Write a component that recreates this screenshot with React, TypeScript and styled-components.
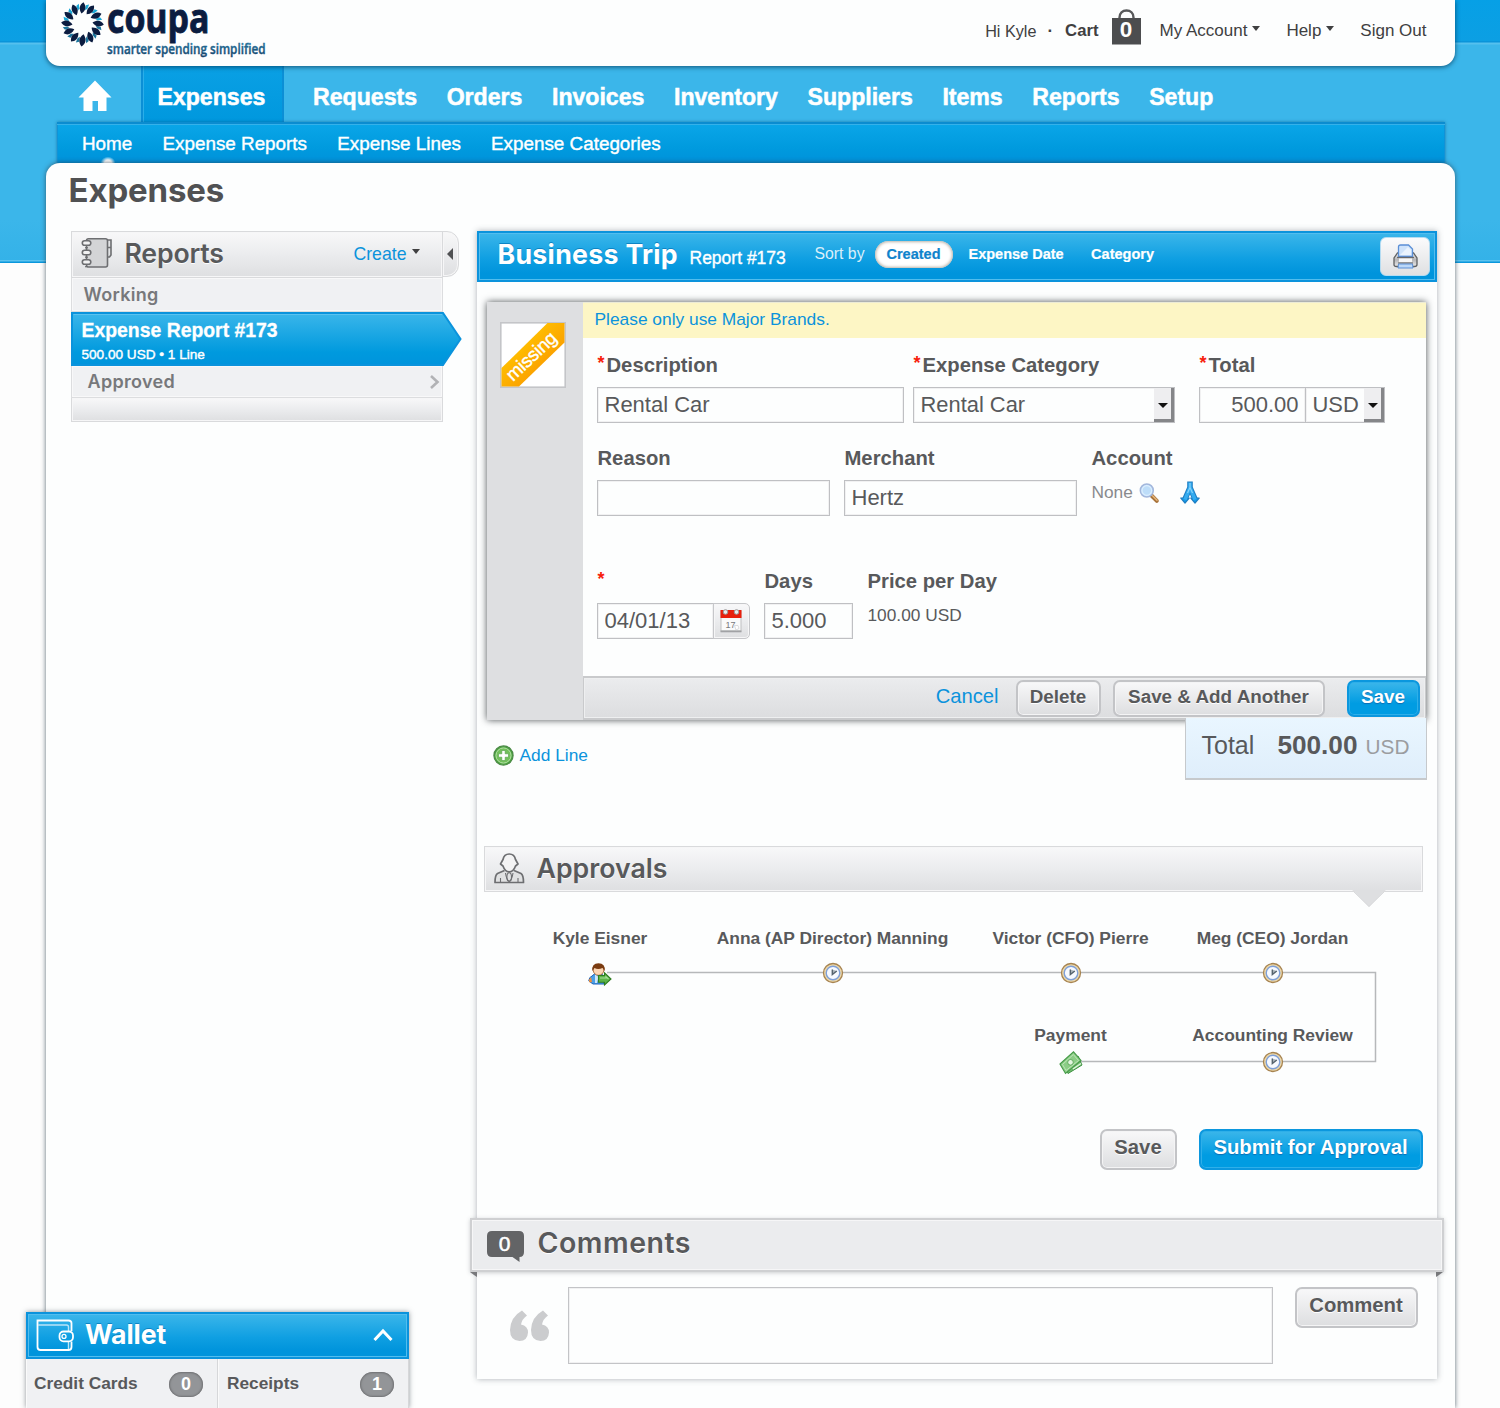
import React from 'react';
import styled, { createGlobalStyle, css } from 'styled-components';

const sans = '"Liberation Sans", Arial, Helvetica, sans-serif';
const display = 'Inter, "Liberation Sans", sans-serif';

const blueBar = css`
  background: linear-gradient(#3bb6ea, #0f9fe2 55%, #0094dc 85%);
  border: 2px solid #0b93dc;
  box-shadow: inset 0 0 0 1px #52bdee;
`;

const greyBar = css`
  background: linear-gradient(#f8f8f9, #ebecee 50%, #dedfe1);
  border: 1px solid #d9dadc;
  box-shadow: inset 0 0 0 1px #f6f6f7;
`;

const GlobalStyle = createGlobalStyle`
  *, *::before, *::after { box-sizing: border-box; }
  body {
    margin: 0;
    background: #fdfdfd;
    font-family: ${sans};
    color: #58595b;
  }
  button, input, textarea { font-family: inherit; color: inherit; margin: 0; outline: none; }
  h1, h2, h3, p { margin: 0; }
  svg { display: block; flex: none; overflow: visible; }
`;

const Page = styled.div`
  position: relative;
  width: 1500px;
  height: 1408px;
  overflow: hidden;
  display: flex;
  flex-direction: column;
  align-items: center;
  background: linear-gradient(
    #06a0e6 0, #0c9fe3 41px, #0a94da 41px, #0a94da 42px, #55c0ee 43px, #55c0ee 44px,
    #3bb6ea 45px, #3bb6ea 220px, #34b2e8 260px, #5cc3ef 260px, #5cc3ef 261px,
    #0b97dc 262px, #0b97dc 263px, #fdfdfd 263px);
`;

/* ---------- header ---------- */

const TopBar = styled.header`
  position: relative;
  z-index: 1;
  width: 1409px;
  height: 66px;
  display: flex;
  justify-content: space-between;
  background: #fdfefe;
  border-radius: 0 0 14px 14px;
  box-shadow: 0 1px 5px rgba(0, 50, 80, 0.75);
  padding: 0 28px 0 12px;
`;

const UserLinks = styled.nav`
  display: flex;
  align-items: center;
  height: 62px;
  font-size: 17px;
  color: #404041;
  white-space: nowrap;
`;

const UserLink = styled.a<{ $gap?: number; $size?: number; $bold?: boolean }>`
  display: flex;
  align-items: center;
  margin-left: ${(p) => p.$gap ?? 26}px;
  font-size: ${(p) => p.$size ?? 17}px;
  font-weight: ${(p) => (p.$bold ? 700 : 400)};
`;

const CartLink = styled(UserLink)`
  padding-bottom: 9px;
`;

const Caret = styled.i<{ $gap?: number }>`
  margin: -5px 0 0 ${(p) => p.$gap ?? 5}px;
  border: 4px solid transparent;
  border-top: 5px solid #404041;
  border-bottom: 0;
`;

const MainNav = styled.nav`
  width: 1387px;
  height: 56px;
  display: flex;
  margin-left: 2px;
  padding-left: 20px;
`;

const HomeLink = styled.a`
  width: 63.5px;
  padding-top: 14px;
`;

const NavLink = styled.a<{ $active?: boolean }>`
  height: 56px;
  padding-left: 29.6px;
  font-size: 23.1px;
  font-weight: 700;
  line-height: 62px;
  color: #fff;
  white-space: nowrap;
  -webkit-text-stroke: 0.5px #fff;
  ${(p) =>
    p.$active &&
    css`
      width: 142.5px;
      background: linear-gradient(#0aa0e4, #0098de);
      border: solid #0b8fd6;
      border-width: 0 2px;
      box-shadow: inset 1px 0 #2aaee9;
      padding-left: 14.5px;
    `}
`;

const SubNav = styled.nav`
  width: 1388px;
  height: 43px;
  margin: 0 0 -2px 2px;
  padding-left: 25px;
  display: flex;
  gap: 30.2px;
  background: linear-gradient(#0aa6e8, #009ade 60%, #0090da);
  border-top: 2px solid #0b8cd0;
  box-shadow: inset 0 1px #35b1ea, inset 1px 0 #0f93d8, inset -1px 0 #0f93d8, 0 0 3px rgba(0, 80, 130, 0.6);
`;

const SubLink = styled.a`
  position: relative;
  font-size: 18.85px;
  line-height: 39px;
  color: #fff;
  white-space: nowrap;
  -webkit-text-stroke: 0.4px #fff;
`;

const ActiveGlow = styled.i`
  position: absolute;
  left: 50%;
  bottom: 2px;
  width: 14px;
  height: 6px;
  margin-left: -6px;
  background: radial-gradient(ellipse at bottom, #fff 35%, rgba(255, 255, 255, 0) 75%);
`;

/* ---------- content frame ---------- */

const Sheet = styled.main`
  position: relative;
  width: 1409px;
  flex: 1;
  padding: 0 17px 0 25px;
  background: #fdfefe;
  border-radius: 14px 14px 0 0;
  box-shadow: 0 0 5px rgba(40, 60, 75, 0.75);
`;

const PageTitle = styled.h1`
  height: 68px;
  margin-left: -2px;
  font: 700 33px/54px ${display};
  letter-spacing: -0.15px;
  color: #505153;
`;

const Columns = styled.div`
  display: flex;
  align-items: flex-start;
`;

/* ---------- sidebar ---------- */

const Sidebar = styled.aside`
  width: 406px;
  flex: none;
`;

const SideHead = styled.div`
  display: flex;
  height: 47px;
`;

const SideHeadMain = styled.div`
  ${greyBar}
  width: 372px;
  display: flex;
  align-items: center;
  padding: 0 22px 3px 9px;
`;

const CollapseTab = styled.button`
  ${greyBar}
  width: 17px;
  height: 46px;
  margin-left: -1px;
  padding: 0 0 0 4px;
  border-radius: 0 12px 12px 0;
`;

const CollapseArrow = styled.i`
  display: block;
  width: 0;
  border: 6px solid transparent;
  border-right-color: #505153;
  border-left: 0;
`;

const SectionTitle = styled.h2<{ $gap?: number; $size?: number; $track?: number }>`
  margin-left: ${(p) => p.$gap ?? 12}px;
  font: 600 ${(p) => p.$size ?? 26.7}px/40px ${display};
  letter-spacing: ${(p) => p.$track ?? 0}px;
  color: #58595b;
  text-shadow: 0 1px #fff;
  white-space: nowrap;
`;

const CreateMenu = styled.a`
  display: flex;
  align-items: center;
  margin: 2px 0 0 auto;
  font-size: 17.7px;
  color: #0b93dc;
`;

const SideRow = styled.div<{ $height: number; $indent: number }>`
  display: flex;
  justify-content: space-between;
  align-items: center;
  width: 372px;
  height: ${(p) => p.$height}px;
  padding: 0 2px 0 ${(p) => p.$indent}px;
  background: #f0f1f3;
  border: solid #dcdddf;
  border-width: 0 1px 1px;
  box-shadow: inset 0 0 0 1px #f8f8f9;
  font: 600 18px/1 ${display};
  letter-spacing: 0.3px;
  color: #77787b;
`;

const SideFoot = styled.div`
  ${greyBar}
  width: 372px;
  height: 24px;
  border-top: 0;
`;

const ActiveReport = styled.a`
  position: relative;
  display: block;
  width: 391px;
  height: 54px;
  padding: 8px 0 0 11px;
  color: #fff;
`;

const ActiveShape = styled.svg`
  position: absolute;
  inset: 0;
`;

const ActiveTitle = styled.div`
  position: relative;
  font-size: 19.4px;
  line-height: 21px;
  font-weight: 700;
  white-space: nowrap;
  -webkit-text-stroke: 0.3px #fff;
`;

const ActiveMeta = styled.div`
  position: relative;
  margin-top: 5px;
  font-size: 13.6px;
  line-height: 17px;
  -webkit-text-stroke: 0.4px #fff;
`;

/* ---------- report panel ---------- */

const Panel = styled.section`
  width: 960px;
  height: 1148px;
  flex: none;
  display: flex;
  flex-direction: column;
  background: #fdfefe;
  box-shadow: 0 0 6px rgba(60, 70, 80, 0.42);
`;

const PanelHead = styled.header`
  ${blueBar}
  height: 51px;
  flex: none;
  display: flex;
  padding: 0 5px 0 19px;
  color: #fff;
  white-space: nowrap;
`;

const PanelTitle = styled.h2`
  width: 192px;
  font: 700 26.7px/43px ${display};
  letter-spacing: 0.3px;
  text-shadow: 0 -1px #0d84c4;
`;

const PanelSub = styled.span`
  width: 125px;
  font-size: 17.5px;
  line-height: 50px;
  -webkit-text-stroke: 0.35px #fff;
`;

const SortLabel = styled.span`
  width: 60px;
  font-size: 15.8px;
  line-height: 42px;
  color: #d9effa;
`;

const SortLink = styled.a<{ $active?: boolean }>`
  height: 27px;
  margin-top: 8px;
  margin-right: ${(p) => (p.$active ? 16 : 27.5)}px;
  padding: 0 ${(p) => (p.$active ? 12 : 0)}px;
  border-radius: 14px;
  font-size: 14.5px;
  font-weight: 700;
  line-height: 26px;
  -webkit-text-stroke: 0.2px;
  ${(p) =>
    p.$active &&
    css`
      background: #fff;
      color: #0f83cc;
      box-shadow: inset 0 0 3px 1px #b9b2a8;
    `}
`;

const PrintButton = styled.button`
  width: 50px;
  height: 39px;
  margin: 4px 0 0 auto;
  padding: 0 0 1px 1px;
  display: flex;
  align-items: center;
  justify-content: center;
  border: 1px solid #b5dcf2;
  border-radius: 6px;
  background: linear-gradient(#fbfbfc, #dfe0e2);
`;

const LineCard = styled.div`
  display: flex;
  width: 939px;
  height: 418px;
  margin: 20px 0 0 10px;
  flex: none;
  background: #dedfe1;
  box-shadow: 0 0 7px rgba(20, 25, 30, 0.75);
`;

const Gutter = styled.div`
  width: 96px;
  padding: 20px 0 0 13px;
`;

const CardMain = styled.div`
  flex: 1;
  display: flex;
  flex-direction: column;
  background: #fdfefe;
`;

const Notice = styled.p`
  height: 36px;
  padding-left: 12px;
  background: #fdf6c5;
  color: #0b93dc;
  font-size: 17.35px;
  line-height: 33px;
  border-top: 1px solid #ecebd6;
`;

const Fields = styled.div`
  flex: 1;
  padding: 15px 0 0 14px;
`;

const FieldRow = styled.div<{ $height: number }>`
  display: flex;
  height: ${(p) => p.$height}px;
`;

const Field = styled.div<{ $width: number }>`
  width: ${(p) => p.$width}px;
`;

const Label = styled.label`
  display: flex;
  height: 34px;
  padding-left: 1px;
  font-size: 20.25px;
  font-weight: 700;
  line-height: 24px;
  white-space: nowrap;
`;

const Star = styled.span`
  width: 9px;
  color: #f71d0c;
  font-size: 18px;
  line-height: 21px;
`;

const InputRow = styled.div`
  display: flex;
`;

const TextInput = styled.input<{ $width: number; $right?: boolean }>`
  width: ${(p) => p.$width}px;
  height: 36px;
  padding: 0 ${(p) => (p.$right ? 6 : 7)}px;
  border: 1px solid #bfc0c3;
  box-shadow: inset 0 0 0 1px #f1f1f2;
  background: #fdfefe;
  font-size: 22px;
  line-height: 34px;
  text-align: ${(p) => (p.$right ? 'right' : 'left')};
`;

const SelectBox = styled.div<{ $width: number; $join?: boolean }>`
  display: flex;
  justify-content: space-between;
  width: ${(p) => p.$width}px;
  height: 36px;
  margin-left: ${(p) => (p.$join ? -1 : 0)}px;
  padding-left: 7px;
  border: 1px solid #bfc0c3;
  box-shadow: inset 0 0 0 1px #f1f1f2;
  background: #fdfefe;
  font-size: 21.9px;
  line-height: 33px;
`;

const SelectArrow = styled.span`
  width: 20px;
  height: 34px;
  display: flex;
  align-items: center;
  justify-content: center;
  background: #eeeef0;
  border: solid #858689;
  border-width: 0 3px 3px 0;

  &::after {
    content: '';
    margin: 3px 0 0 1px;
    border: 5px solid transparent;
    border-top: 5px solid #111;
    border-bottom: 0;
  }
`;

const CalendarButton = styled.button`
  ${greyBar}
  width: 37px;
  height: 36px;
  margin-left: -1px;
  padding: 0 0 1px;
  border-color: #c6c7ca;
  border-radius: 0 5px 5px 0;
  display: flex;
  align-items: center;
  justify-content: center;
`;

const PlainValue = styled.div<{ $muted?: boolean }>`
  display: flex;
  align-items: center;
  height: 25px;
  padding-left: 1px;
  font-size: 17.3px;
  color: ${(p) => (p.$muted ? '#898a8d' : '#58595b')};
`;

const CardActions = styled.footer`
  display: flex;
  align-items: center;
  justify-content: flex-end;
  height: 44px;
  padding: 0 5px 0 0;
  background: linear-gradient(#ebecee, #dcdddf);
  border: 2px solid #c9cacc;
  border-width: 2px 1px 2px 1px;
  box-shadow: inset 0 0 0 1px #eeeff0;
`;

const CancelLink = styled.a`
  margin: 0 17px 3px 0;
  font-size: 20.2px;
  color: #0b93dc;
`;

const Button = styled.button<{ $primary?: boolean; $large?: boolean; $width: number; $left?: number }>`
  width: ${(p) => p.$width}px;
  height: ${(p) => (p.$large ? 41 : 37)}px;
  flex: none;
  margin-left: ${(p) => p.$left ?? 0}px;
  padding: 0 0 ${(p) => (p.$large ? 5 : 2)}px;
  border: 2px solid #c3c4c7;
  border-radius: 7px;
  background: linear-gradient(#f8f8f9, #dddee0);
  box-shadow: inset 0 0 0 1px #f4f4f5;
  color: #58595b;
  font-size: ${(p) => (p.$large ? 20.3 : 18.85)}px;
  font-weight: 700;
  text-shadow: 0 1px #fff;
  white-space: nowrap;
  ${(p) =>
    p.$primary &&
    css`
      border-color: #0b97de;
      background: linear-gradient(#3bb6ea, #009ce2 65%);
      box-shadow: inset 0 0 0 1px #2eafe9;
      color: #fff;
      text-shadow: 0 1px 1px #0b6eb4;
    `}
`;

const BelowCard = styled.div`
  display: flex;
  justify-content: space-between;
  height: 126px;
  padding: 0 10px 0 16px;
  flex: none;
`;

const AddLine = styled.a`
  display: flex;
  align-items: center;
  gap: 6px;
  height: 70px;
  font-size: 17.35px;
  color: #0b93dc;
`;

const TotalBox = styled.div`
  position: relative;
  width: 242px;
  height: 62px;
  margin-top: -2px;
  padding: 0 16px 6px 16px;
  display: flex;
  align-items: center;
  justify-content: space-between;
  background: linear-gradient(#e9f6ff, #dfeefb);
  border: solid #c6c9cc;
  border-width: 0 1px 2px;
  font-size: 25px;
`;

const Amount = styled.span`
  margin-left: 14px;
  font-size: 26.2px;
  font-weight: 700;
`;

const Currency = styled.span`
  margin-left: -1px;
  padding-top: 3px;
  font-size: 20.8px;
  color: #9b9da0;
`;

/* ---------- approvals ---------- */

const ApprovalsHead = styled.header`
  ${greyBar}
  position: relative;
  display: flex;
  align-items: center;
  flex: none;
  width: 939px;
  height: 46px;
  margin-left: 7px;
  padding: 0 0 2px 9px;
`;

const HeadPointer = styled.svg`
  position: absolute;
  right: 36px;
  top: 43px;
`;

const Flow = styled.div`
  position: relative;
  height: 237px;
  flex: none;
`;

const FlowLines = styled.svg`
  position: absolute;
  left: 0;
  top: 0;
`;

const Step = styled.div<{ $x: number; $y: number; $gap: number }>`
  position: absolute;
  left: ${(p) => p.$x - 130}px;
  top: ${(p) => p.$y}px;
  width: 260px;
  display: flex;
  flex-direction: column;
  align-items: center;
  gap: ${(p) => p.$gap}px;
  font-size: 17.4px;
  font-weight: 700;
  line-height: 20px;
  white-space: nowrap;
`;

const FormActions = styled.div`
  display: flex;
  justify-content: flex-end;
  height: 89px;
  padding-right: 14px;
  flex: none;
`;

/* ---------- comments ---------- */

const CommentsHead = styled.header`
  position: relative;
  display: flex;
  align-items: center;
  flex: none;
  width: 974px;
  height: 54px;
  margin-left: -7px;
  padding: 0 0 4px 15px;
  background: #ebecee;
  border: 2px solid #cfd0d2;
  box-shadow: inset 0 0 0 1px #f6f6f7, 0 1px 4px rgba(60, 65, 70, 0.25);

  &::before,
  &::after {
    content: '';
    position: absolute;
    top: 52px;
    border: 3px solid transparent;
    border-top-color: #77787b;
  }
  &::before { left: -2px; border-right: 3px solid #77787b; border-bottom-width: 2px; border-left-width: 4px; }
  &::after { right: -1px; border-left: 3px solid #77787b; border-bottom-width: 2px; border-right-width: 4px; }
`;

const CommentsBody = styled.div`
  display: flex;
  align-items: flex-start;
  padding: 15px 0 0 33px;
`;

const CommentArea = styled.textarea`
  display: block;
  width: 705px;
  height: 77px;
  margin: 0 22px 0 18px;
  border: 1px solid #c3c4c7;
  box-shadow: inset 0 0 0 1px #f1f1f2;
  background: #fdfefe;
  resize: none;
`;

/* ---------- wallet ---------- */

const WalletDock = styled.aside`
  position: absolute;
  left: 26px;
  bottom: 0;
  width: 383px;
  height: 96px;
  z-index: 2;
  box-shadow: 0 0 5px rgba(40, 50, 60, 0.5);
`;

const WalletHead = styled.header`
  ${blueBar}
  display: flex;
  align-items: center;
  height: 47px;
  padding: 0 14px 1px 8px;
`;

const WalletTitle = styled.h3`
  margin: -2px auto 0 10px;
  font: 700 26.7px/36px ${display};
  letter-spacing: -0.1px;
  color: #fff;
  text-shadow: 0 -1px #0d84c4;
`;

const WalletCells = styled.div`
  display: flex;
  height: 49px;
  background: #f0f1f3;
`;

const WalletCell = styled.div<{ $width: number }>`
  display: flex;
  align-items: center;
  justify-content: space-between;
  width: ${(p) => p.$width}px;
  padding: 0 14px 0 8px;
  border-right: 1px solid #d6d7d9;
  box-shadow: inset 1px 0 #fafafa;
  font-size: 17.3px;
  font-weight: 700;

  & + & { padding-left: 9px; }
`;

const Badge = styled.span`
  width: 34px;
  height: 25px;
  margin-top: 1px;
  border-radius: 13px;
  background: #939598;
  box-shadow: inset 0 0 2px 1px #6f7072;
  color: #fff;
  font-size: 18px;
  line-height: 24px;
  text-align: center;
`;

/* ---------- drawings ---------- */

const petals = Array.from({ length: 12 }, (_, i) => i * 30);

const Logo = () => (
  <svg width="215" height="62" viewBox="0 0 215 62">
    <defs>
      <linearGradient id="tag" x1="0" y1="0" x2="0" y2="1">
        <stop offset="0" stopColor="#2b83ad" />
        <stop offset="1" stopColor="#143f66" />
      </linearGradient>
    </defs>
    <g transform="translate(24.500 23.500)">
      {petals.map((a) => (
        <path
          key={`b${a}`}
          d="M-1 -13.500 L1 -15.500 L1.500 -20 L-1.500 -18.500 Z"
          fill={a > 75 && a < 255 ? '#1b769e' : '#1aa9d8'}
          transform={`rotate(${a + 15})`}
        />
      ))}
      {petals.map((a) => (
        <path
          key={a}
          d="M-1 -10 C2.500 -12.500 4.800 -16 1 -21.300 C-2.800 -19 -4.200 -15 -1 -10 Z"
          fill="#0b1c40"
          transform={`rotate(${a})${a === 180 ? ' scale(1.080)' : ''}`}
        />
      ))}
    </g>
    <text x="49" y="33" fontFamily="'Open Sans'" fontWeight="700" fontSize="41" fill="#0b1c40" stroke="#0b1c40" strokeWidth=".9" textLength="102.500" lengthAdjust="spacingAndGlyphs">
      coupa
    </text>
    <text x="49" y="54" fontFamily="'Open Sans'" fontWeight="600" fontSize="15" fill="url(#tag)" stroke="url(#tag)" strokeWidth=".4" textLength="158.500" lengthAdjust="spacingAndGlyphs">
      smarter spending simplified
    </text>
  </svg>
);

const BagIcon = () => (
  <svg width="29" height="36" viewBox="0 0 29 36">
    <path d="M7.500 12 V8.500 C7.500 4 10.500 1.500 14.500 1.500 C18.500 1.500 21.500 4 21.500 8.500 V12" fill="none" stroke="#58595b" strokeWidth="2.400" />
    <rect x="0" y="9" width="29" height="26.500" fill="#4c4d4f" />
    <text x="14" y="27.500" fontFamily="Liberation Sans" fontWeight="700" fontSize="22.500" fill="#fff" textAnchor="middle">0</text>
  </svg>
);

const HomeIcon = () => (
  <svg width="34" height="32" viewBox="0 0 34 32">
    <path d="M17 .5 L33.500 17.500 H28.500 V31 H20 V21 H14.500 V31 H5.500 V17.500 H.5 Z" fill="#fff" />
  </svg>
);

const NotebookIcon = () => (
  <svg width="32" height="32" viewBox="0 0 32 32" fill="none" stroke="#6d6e71" strokeWidth="1.600">
    <path d="M25.500 3 H30 V9.500 L30 11.500 V18 L28.500 20 H26 M26 10.500 H30" fill="#e2e3e5" />
    <rect x="5.500" y="1.800" width="21" height="28.200" rx="2" fill="#d3d4d6" />
    {[6, 15.500, 25].map((y) => (
      <g key={y}>
        <rect x="1.300" y={y - 2.300} width="8.500" height="4.600" rx="2.300" fill="#f1f1f2" />
        <path d={`M4 ${y + 4.700} h3`} strokeWidth="1.200" />
      </g>
    ))}
  </svg>
);

const ChevronRight = () => (
  <svg width="11" height="16" viewBox="0 0 11 16">
    <path d="M2 2 L8.500 8 L2 14" fill="none" stroke="#b1b2b5" strokeWidth="2.600" />
  </svg>
);

const PrinterIcon = () => (
  <svg width="25" height="25" viewBox="0 0 25 25">
    <defs>
      <linearGradient id="printer" x1="0" y1="0" x2="0" y2="1">
        <stop offset="0" stopColor="#f4f4f4" />
        <stop offset=".5" stopColor="#b5b5b7" />
        <stop offset="1" stopColor="#ececec" />
      </linearGradient>
    </defs>
    <path d="M4.500 9 H20.500 L24 14 V20.500 Q24 22.500 21.500 22.500 H3.500 Q1 22.500 1 20.500 V14 Z" fill="url(#printer)" stroke="#5f6062" strokeWidth="1.300" />
    <path d="M5.500 12.500 V3 Q5.500 1 7.500 1 H15.500 L19.500 5 V12.500 Z" fill="#cfe3fb" stroke="#5b8fd6" strokeWidth="1.300" />
    <path d="M7 11 L15 3 L18 6 V11 Z" fill="#eaf3fe" />
    <path d="M4 13.500 H21" stroke="#67686a" strokeWidth="1.300" />
    <rect x="6" y="14.500" width="13" height="3.500" fill="#f6f6f6" />
    <path d="M5 19 H20" stroke="#67686a" strokeWidth="1.100" />
    <path d="M5.500 20 H19.500 L20 24 H5 Z" fill="#bcd8f8" stroke="#5b8fd6" strokeWidth="1" />
  </svg>
);

const MissingReceipt = () => (
  <svg width="66" height="66" viewBox="0 0 66 66">
    <defs>
      <linearGradient id="ribbon" x1="0" y1="0" x2="1" y2="1">
        <stop offset=".3" stopColor="#ffc000" />
        <stop offset=".7" stopColor="#fb9f00" />
      </linearGradient>
    </defs>
    <rect x=".8" y=".8" width="64.400" height="64.400" fill="#fff" stroke="#c4c5c8" strokeWidth="1.600" />
    <path d="M1.500 46 L47.500 1 H64.500 V20.500 L19 64.500 H1.500 Z" fill="url(#ribbon)" />
    <text transform="translate(13 60) rotate(-43.500)" fontFamily="Liberation Sans" fontSize="18.500" fill="#fff" stroke="#fff" strokeWidth=".4" textLength="62" lengthAdjust="spacing">
      missing
    </text>
  </svg>
);

const SearchIcon = () => (
  <svg width="20" height="20" viewBox="0 0 20 20">
    <path d="M12.500 12.500 L17.800 17.800" stroke="#a8733a" strokeWidth="4" strokeLinecap="round" />
    <path d="M13.500 12.700 L18 17.200" stroke="#e5b67b" strokeWidth="1.500" strokeLinecap="round" />
    <circle cx="7.800" cy="7.500" r="6.500" fill="#bdddf9" stroke="#a3b7dc" strokeWidth="1.500" />
    <circle cx="7.800" cy="7.500" r="4.800" fill="none" stroke="#dceefe" strokeWidth="1.200" />
  </svg>
);

const SplitIcon = () => (
  <svg width="20" height="23" viewBox="0 0 20 23">
    <g strokeLinejoin="round" strokeLinecap="butt" fill="none">
      <path d="M10 .5 V6.500 L5 18 M10 6.500 L15 18" stroke="#1f7fc4" strokeWidth="5.600" />
      <path d="M.8 17 H9.200 L5 22 Z M10.800 17 H19.200 L15 22 Z" fill="#14a0ee" stroke="#1f7fc4" strokeWidth="1.200" />
      <path d="M10 1.500 V6.500 L5 18.500 M10 6.500 L15 18.500" stroke="#35acf0" strokeWidth="3.500" />
      <path d="M10 2 V6.500 L7.500 12 M10 6.500 L12.500 12" stroke="#86d3fb" strokeWidth="1.200" />
    </g>
  </svg>
);

const CalendarIcon = () => (
  <svg width="22" height="25" viewBox="0 0 22 25">
    <rect x="1" y="3" width="20" height="20" fill="#fafafa" stroke="#bfc0c2" strokeWidth="1" />
    <path d="M.5 22.500 H21.500 V24.300 H.5 Z" fill="#a1a2a5" />
    <rect x=".5" y="2" width="21" height="8" fill="#e8200d" />
    <circle cx="5.500" cy="4" r="2.300" fill="#ececec" stroke="#999" />
    <circle cx="16.500" cy="4" r="2.300" fill="#ececec" stroke="#999" />
    <text x="10.500" y="19.500" fontFamily="Liberation Sans" fontSize="9" fill="#77787b" textAnchor="middle">17</text>
    <path d="M14.500 17.500 L18 17.500 L19 20.500 L16 22 Z" fill="#fff" stroke="#cfcfd1" strokeWidth=".7" />
  </svg>
);

const AddIcon = () => (
  <svg width="21" height="21" viewBox="0 0 21 21">
    <circle cx="10.500" cy="10.500" r="9.600" fill="#4aa33d" stroke="#4c8a47" strokeWidth="1.200" />
    <circle cx="10.500" cy="10.500" r="7.600" fill="#72c05b" stroke="#b9e2ab" strokeWidth="1" />
    <path d="M8.800 5.500 H12.200 V8.800 H15.500 V12.200 H12.200 V15.500 H8.800 V12.200 H5.500 V8.800 H8.800 Z" fill="#fff" stroke="#4f9c43" strokeWidth=".6" />
  </svg>
);

const PersonIcon = () => (
  <svg width="31" height="31" viewBox="0 0 31 31" fill="none" stroke="#6d6e71" strokeWidth="1.700" strokeLinejoin="round">
    <path d="M10.500 17.500 L3.500 20.500 Q1 22 1 29.500 H29.500 Q29.500 22 27 20.500 L20 17.500" fill="#e0e1e2" />
    <path d="M15.200 1 Q20.500 1 21.500 6.500 L24 11 L21.500 13 Q19.500 18.800 15.200 18.800 Q11 18.800 9 13 L6.500 11 L9 6.500 Q10 1 15.200 1 Z" fill="#f3f3f4" />
    <path d="M6.500 25 V29 M24 25 V29 M11.500 20 Q12.500 27 15.200 28.500 Q18 27 19 20" strokeWidth="1.100" />
    <ellipse cx="15.200" cy="24" rx="2.300" ry="4.300" strokeWidth="1.100" />
  </svg>
);

const PointerShape = () => (
  <HeadPointer width="34" height="18" viewBox="0 0 34 18">
    <path d="M0 0 L2 1.500 L17 17 L32 1.500 L34 0 Z" fill="#dedfe1" />
    <path d="M2 2 L17 16.500 L32 2" fill="none" stroke="#d9dadc" strokeWidth="1" />
  </HeadPointer>
);

const ClockIcon = () => (
  <svg width="22" height="22" viewBox="0 0 22 22">
    <circle cx="11" cy="11" r="9.500" fill="#edd9ab" stroke="#a78451" strokeWidth="1.300" />
    <circle cx="11" cy="11" r="6.800" fill="#f7faff" stroke="#7fa0d8" strokeWidth="1.400" />
    <path d="M10.300 7.500 V12.500 L14.800 9" fill="#a9b3ba" stroke="#56646f" strokeWidth="1.400" />
  </svg>
);

const SubmitterIcon = () => (
  <svg width="24" height="23" viewBox="0 0 24 23">
    <path d="M.8 18 Q1 14 4 13 L7 10.500 H14 L16 21 H5 Z" fill="#4c9fe6" stroke="#1e62b8" strokeWidth="1" />
    <path d="M.8 17 L3 14 L4 19 L1.500 19.500 Z" fill="#ef8f3b" />
    <path d="M7 11 L10.500 14 L9 20 H7 Z" fill="#cfe6fa" />
    <circle cx="10.500" cy="7" r="5.300" fill="#fbd5b3" stroke="#a55a25" strokeWidth=".8" />
    <path d="M4.300 8 Q3.500 .3 10.500 .3 Q17.500 .3 16.700 8 L14.500 5 Q10 7 6.500 5 Z" fill="#7b3c11" />
    <path d="M10.500 12.500 H16.500 V9.800 L23 16 L16.500 22 V19.200 H10.500 Z" fill="#5db548" stroke="#2f7d20" strokeWidth="1.100" />
    <path d="M12 15 H18 V13.800 L20.500 16" fill="none" stroke="#a9dd99" strokeWidth="1.200" />
  </svg>
);

const CashIcon = () => (
  <svg width="24" height="24" viewBox="0 0 24 24">
    <path d="M4 16 L19 5 L23 14 L9 22.500 Z" fill="#71bd71" stroke="#3c913f" strokeWidth="1" />
    <path d="M1 13 L14.500 .8 L22 9.500 L6.500 22.500 Z" fill="#8bcd86" stroke="#469a48" strokeWidth="1.100" />
    <path d="M3.500 13.500 L14.300 3.500 L19.500 9.500 L7 19.500 Z" fill="none" stroke="#bde4b7" strokeWidth="1" />
    <circle cx="11.500" cy="11.300" r="2.800" fill="#e3f5df" stroke="#4c9d4c" strokeWidth=".8" />
    <path d="M14 18 L22 12.500" stroke="#e3f5df" strokeWidth="1.500" />
  </svg>
);

const BubbleFrame = styled.svg`
  margin-top: 7px;
`;

const CountBubble = () => (
  <BubbleFrame width="38" height="33" viewBox="0 0 38 33">
    <path d="M5 1 H32 Q37 1 37 6 V22 Q37 27 32.500 27 V32 L25.500 27 H5 Q0 27 0 22 V6 Q0 1 5 1 Z" fill="#636466" />
    <text x="17.500" y="20.500" fontFamily="Liberation Sans" fontSize="21" fill="#fff" stroke="#fff" strokeWidth=".5" textAnchor="middle">0</text>
  </BubbleFrame>
);

const QuoteMark = () => (
  <svg width="40" height="76" viewBox="0 0 40 76">
    {[0, 21].map((x) => (
      <path key={x} transform={`translate(${x} 22)`} d="M12 1.500 L17 6.500 Q12 10 11 15.500 Q18 17 18 23.500 Q17.500 32 9.500 32 Q0 31.500 0 21 Q.5 8 12 1.500 Z" fill="#cbccce" />
    ))}
  </svg>
);

const WalletIcon = () => (
  <svg width="39" height="33" viewBox="0 0 39 33" fill="none" stroke="#fff" strokeWidth="1.800">
    <path d="M35.500 12 V4 Q35.500 1.500 32.500 1.500 H1.500 V28 Q1.500 31 4.500 31 H32.500 Q35.500 31 35.500 28 V22.500" />
    <path d="M2 6 H30.500 Q32.500 6 32.500 8 V12 M32.500 22.500 V30" stroke="#b9e4f8" strokeWidth="1.400" />
    <rect x="23.500" y="12.500" width="13.500" height="9.800" rx="4" />
    <circle cx="28" cy="17.400" r="2" strokeWidth="1.300" />
  </svg>
);

const ChevronUp = () => (
  <svg width="20" height="14" viewBox="0 0 20 14">
    <path d="M1.500 12 L10 3 L18.500 12" fill="none" stroke="#fff" strokeWidth="3" />
  </svg>
);

/* ---------- page ---------- */

const navItems = ['Requests', 'Orders', 'Invoices', 'Inventory', 'Suppliers', 'Items', 'Reports', 'Setup'];

const steps = [
  { name: 'Kyle Eisner', x: 123.5, y: 36, gap: 15, icon: <SubmitterIcon /> },
  { name: 'Anna (AP Director) Manning', x: 356, y: 36, gap: 14, icon: <ClockIcon /> },
  { name: 'Victor (CFO) Pierre', x: 594, y: 36, gap: 14, icon: <ClockIcon /> },
  { name: 'Meg (CEO) Jordan', x: 796, y: 36, gap: 14, icon: <ClockIcon /> },
  { name: 'Payment', x: 594, y: 133, gap: 5.5, icon: <CashIcon /> },
  { name: 'Accounting Review', x: 796, y: 133, gap: 6, icon: <ClockIcon /> },
];

export default function App() {
  return (
    <Page>
      <GlobalStyle />
      <TopBar>
        <Logo />
        <UserLinks>
          <UserLink $size={16.2}>Hi Kyle</UserLink>
          <UserLink $gap={11} $bold>·</UserLink>
          <UserLink $gap={12} $size={16.7} $bold>Cart</UserLink>
          <CartLink $gap={13}><BagIcon /></CartLink>
          <UserLink $gap={19}>My Account<Caret /></UserLink>
          <UserLink>Help<Caret /></UserLink>
          <UserLink>Sign Out</UserLink>
        </UserLinks>
      </TopBar>
      <MainNav>
        <HomeLink><HomeIcon /></HomeLink>
        <NavLink $active>Expenses</NavLink>
        {navItems.map((item) => (
          <NavLink key={item}>{item}</NavLink>
        ))}
      </MainNav>
      <SubNav>
        <SubLink>Home<ActiveGlow /></SubLink>
        <SubLink>Expense Reports</SubLink>
        <SubLink>Expense Lines</SubLink>
        <SubLink>Expense Categories</SubLink>
      </SubNav>
      <Sheet>
        <PageTitle>Expenses</PageTitle>
        <Columns>
          <Sidebar>
            <SideHead>
              <SideHeadMain>
                <NotebookIcon />
                <SectionTitle $track={-0.2}>Reports</SectionTitle>
                <CreateMenu>Create<Caret /></CreateMenu>
              </SideHeadMain>
              <CollapseTab><CollapseArrow /></CollapseTab>
            </SideHead>
            <SideRow $height={34} $indent={12}>Working</SideRow>
            <ActiveReport>
              <ActiveShape width="391" height="54" viewBox="0 0 391 54">
                <defs>
                  <linearGradient id="active" x1="0" y1="0" x2="0" y2="1">
                    <stop offset="0" stopColor="#3bb6ea" />
                    <stop offset=".75" stopColor="#009ade" />
                    <stop offset="1" stopColor="#0094dc" />
                  </linearGradient>
                </defs>
                <path d="M1 1 H372 L389.500 27 L372 53 H1 Z" fill="url(#active)" stroke="#0b93dc" strokeWidth="2" />
                <path d="M2.500 2.500 H371" stroke="#5bc2ef" strokeWidth="1" />
              </ActiveShape>
              <ActiveTitle>Expense Report #173</ActiveTitle>
              <ActiveMeta>500.00 USD • 1 Line</ActiveMeta>
            </ActiveReport>
            <SideRow $height={32} $indent={16}>Approved<ChevronRight /></SideRow>
            <SideFoot />
          </Sidebar>

          <Panel>
            <PanelHead>
              <PanelTitle>Business Trip</PanelTitle>
              <PanelSub>Report #173</PanelSub>
              <SortLabel>Sort by</SortLabel>
              <SortLink $active>Created</SortLink>
              <SortLink>Expense Date</SortLink>
              <SortLink>Category</SortLink>
              <PrintButton><PrinterIcon /></PrintButton>
            </PanelHead>

            <LineCard>
              <Gutter><MissingReceipt /></Gutter>
              <CardMain>
                <Notice>Please only use Major Brands.</Notice>
                <Fields>
                  <FieldRow $height={93}>
                    <Field $width={316}>
                      <Label><Star>*</Star>Description</Label>
                      <TextInput $width={307} defaultValue="Rental Car" />
                    </Field>
                    <Field $width={286}>
                      <Label><Star>*</Star>Expense Category</Label>
                      <SelectBox $width={262}>Rental Car<SelectArrow /></SelectBox>
                    </Field>
                    <Field $width={187}>
                      <Label><Star>*</Star>Total</Label>
                      <InputRow>
                        <TextInput $width={107} $right defaultValue="500.00" />
                        <SelectBox $width={80} $join>USD<SelectArrow /></SelectBox>
                      </InputRow>
                    </Field>
                  </FieldRow>
                  <FieldRow $height={123}>
                    <Field $width={247}>
                      <Label>Reason</Label>
                      <TextInput $width={233} />
                    </Field>
                    <Field $width={247}>
                      <Label>Merchant</Label>
                      <TextInput $width={233} defaultValue="Hertz" />
                    </Field>
                    <Field $width={160}>
                      <Label>Account</Label>
                      <PlainValue $muted>
                        <Field $width={47}>None</Field>
                        <Field $width={41}><SearchIcon /></Field>
                        <SplitIcon />
                      </PlainValue>
                    </Field>
                  </FieldRow>
                  <FieldRow $height={70}>
                    <Field $width={167}>
                      <Label><Star>*</Star></Label>
                      <InputRow>
                        <TextInput $width={117} defaultValue="04/01/13" />
                        <CalendarButton><CalendarIcon /></CalendarButton>
                      </InputRow>
                    </Field>
                    <Field $width={103}>
                      <Label>Days</Label>
                      <TextInput $width={89} defaultValue="5.000" />
                    </Field>
                    <Field $width={160}>
                      <Label>Price per Day</Label>
                      <PlainValue>100.00 USD</PlainValue>
                    </Field>
                  </FieldRow>
                </Fields>
                <CardActions>
                  <CancelLink>Cancel</CancelLink>
                  <Button $width={85}>Delete</Button>
                  <Button $width={212} $left={12}>Save &amp; Add Another</Button>
                  <Button $width={73} $left={22} $primary>Save</Button>
                </CardActions>
              </CardMain>
            </LineCard>

            <BelowCard>
              <AddLine><AddIcon />Add Line</AddLine>
              <TotalBox>Total<Amount>500.00</Amount><Currency>USD</Currency></TotalBox>
            </BelowCard>

            <ApprovalsHead>
              <PersonIcon />
              <SectionTitle>Approvals</SectionTitle>
              <PointerShape />
            </ApprovalsHead>
            <Flow>
              <FlowLines width="960" height="237" viewBox="0 0 960 237">
                <path d="M130 80.500 H898.500 V169.500 H600" fill="none" stroke="#b6b8ba" strokeWidth="1.500" />
              </FlowLines>
              {steps.map((s) => (
                <Step key={s.name} $x={s.x} $y={s.y} $gap={s.gap}>
                  {s.name}
                  {s.icon}
                </Step>
              ))}
            </Flow>
            <FormActions>
              <Button $large $width={77}>Save</Button>
              <Button $large $primary $width={224} $left={22}>Submit for Approval</Button>
            </FormActions>

            <CommentsHead>
              <CountBubble />
              <SectionTitle $gap={13} $size={28.5} $track={0.5}>Comments</SectionTitle>
            </CommentsHead>
            <CommentsBody>
              <QuoteMark />
              <CommentArea />
              <Button $large $width={123}>Comment</Button>
            </CommentsBody>
          </Panel>
        </Columns>
      </Sheet>

      <WalletDock>
        <WalletHead>
          <WalletIcon />
          <WalletTitle>Wallet</WalletTitle>
          <ChevronUp />
        </WalletHead>
        <WalletCells>
          <WalletCell $width={192}>Credit Cards<Badge>0</Badge></WalletCell>
          <WalletCell $width={191}>Receipts<Badge>1</Badge></WalletCell>
        </WalletCells>
      </WalletDock>
    </Page>
  );
}
